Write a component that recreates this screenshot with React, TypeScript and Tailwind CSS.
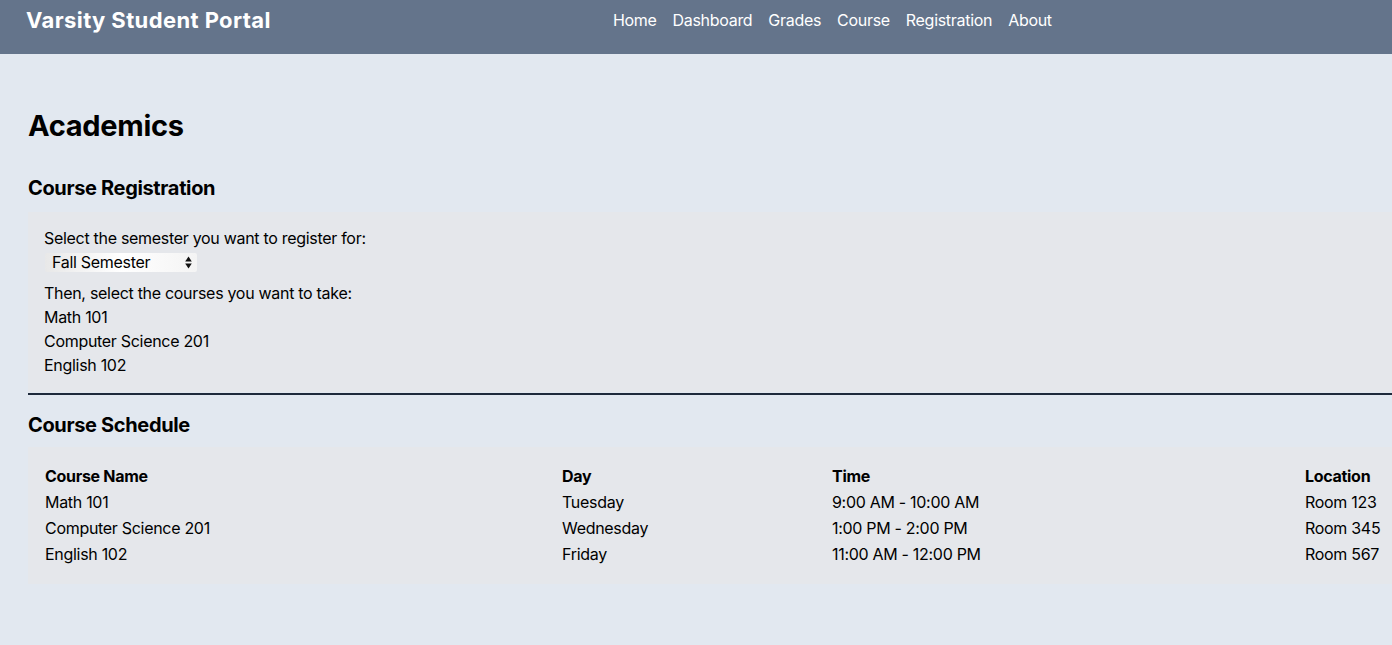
import React from "react";

const font = { fontFamily: "Inter, 'Noto Sans', 'Liberation Sans', sans-serif" };

const rows = [
  ["Math 101", "Tuesday", "9:00 AM - 10:00 AM", "Room 123"],
  ["Computer Science 201", "Wednesday", "1:00 PM - 2:00 PM", "Room 345"],
  ["English 102", "Friday", "11:00 AM - 12:00 PM", "Room 567"],
];

export default function App() {
  return (
    <div className="min-h-screen bg-[#e2e8f0] text-black tracking-[-0.3px]" style={font}>
      <header className="h-[54px] bg-[#64748b] flex items-start pt-[6px] pl-[26px]">
        <div className="text-[22px] leading-[28px] font-bold text-white tracking-[0.4px]">Varsity Student Portal</div>
        <nav className="ml-[342px] flex gap-4 text-[16px] leading-[28px] text-white">
          <a>Home</a>
          <a>Dashboard</a>
          <a>Grades</a>
          <a>Course</a>
          <a>Registration</a>
          <a>About</a>
        </nav>
      </header>
      <main className="pl-[28px] pt-[54px] pb-[61px]">
        <h1 className="text-[29px] leading-[36px] font-bold tracking-[-0.3px]">Academics</h1>
        <h2 className="mt-[30px] text-[20px] leading-[28px] font-bold tracking-[-0.35px]">Course Registration</h2>
        <section className="mt-[10px] bg-[#e5e7eb] pl-[16px] pt-[14px] pb-[15px] text-[16px] leading-[24px]">
          <div>Select the semester you want to register for:</div>
          <div className="h-[24px] flex items-center">
            <div className="relative ml-[1px] w-[152px] h-[19px] bg-gradient-to-r from-[#e8e8e8] via-white to-[#f4f4f4] rounded-[2px] flex items-center">
              <span className="pl-[7px] text-[16px] leading-[19px]">Fall Semester</span>
              <svg className="absolute right-[5px] top-[3px]" width="7" height="13" viewBox="0 0 7 13">
                <path d="M3.5 0.5 L6.8 5.5 L0.2 5.5 Z" fill="#111" />
                <path d="M3.5 12.5 L6.8 7.5 L0.2 7.5 Z" fill="#111" />
              </svg>
            </div>
          </div>
          <div className="mt-[7px]">Then, select the courses you want to take:</div>
          <div>Math 101</div>
          <div>Computer Science 201</div>
          <div>English 102</div>
        </section>
        <hr className="border-0 h-[2px] bg-[#1e293b] mt-[1px]" />
        <h2 className="mt-[16px] text-[20px] leading-[28px] font-bold tracking-[-0.35px]">Course Schedule</h2>
        <section className="mt-[8px] bg-[#e5e7eb] pl-[16px] pt-[16px] pb-[17px] text-[16px]">
          <div className="grid grid-cols-[517px_270px_473px_1fr]">
            {["Course Name", "Day", "Time", "Location"].map((h) => (
              <div key={h} className="h-[26px] leading-[26px] pl-[1px] font-bold">{h}</div>
            ))}
            {rows.map((r) =>
              r.map((c, i) => (
                <div key={r[0] + i} className="h-[26px] leading-[26px] pl-[1px]">{c}</div>
              ))
            )}
          </div>
        </section>
      </main>
    </div>
  );
}
